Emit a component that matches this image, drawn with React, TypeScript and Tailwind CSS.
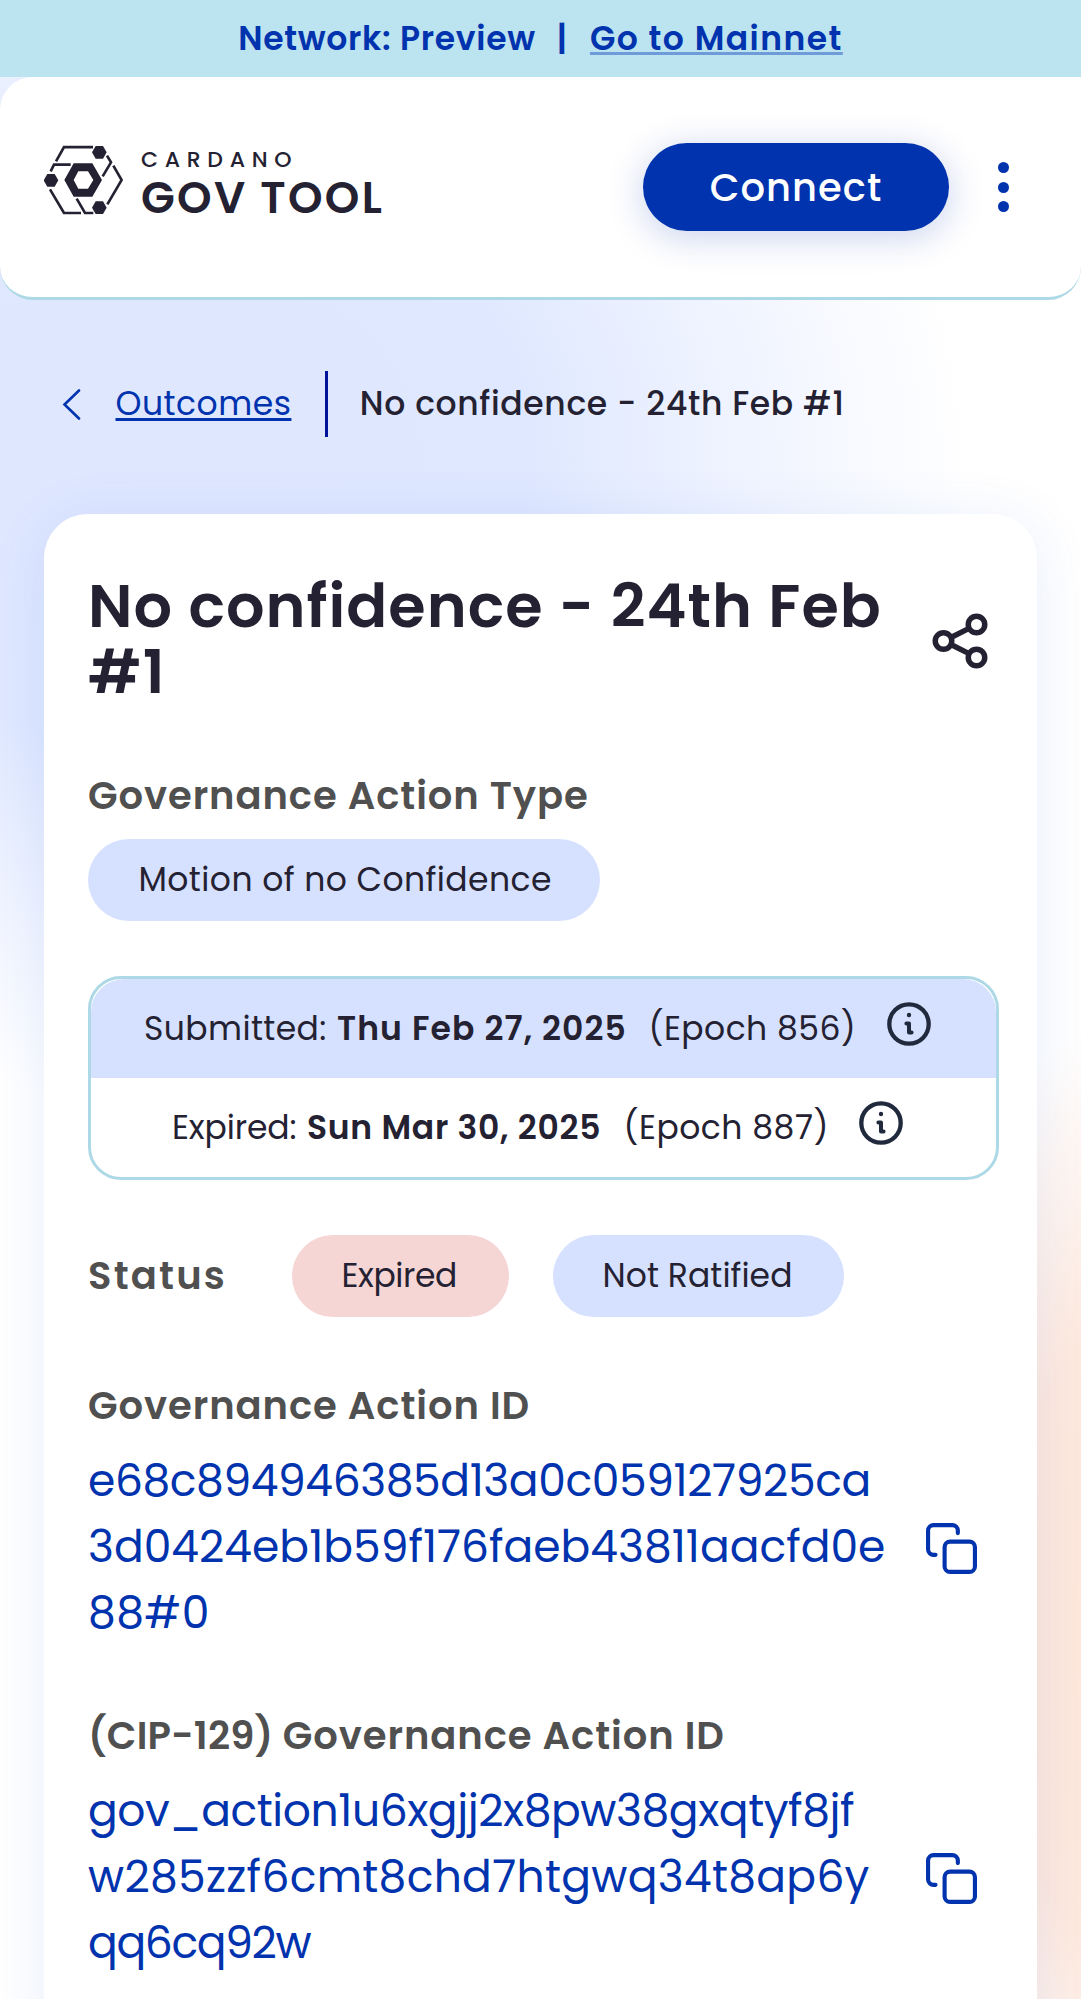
import type { ReactNode } from "react";

function Logo() {
  return (
    <svg className="block h-[70px] w-[79px] shrink-0" viewBox="42 45 237 210" fill="none">
      <g fill="#242232">
        <path d="M186 67 197 48h22l11 19-11 19h-22z" />
        <path d="M41 151l11-19h22l11 19-11 19H52z" />
        <path d="M186 233l11-19h22l11 19-11 19h-22z" />
        <path
          fillRule="evenodd"
          d="M103 150l28-50h56l29 50-29 50h-56zM131 150l14 26h29l16-26-16-26h-29z"
        />
      </g>
      <g stroke="#242232" strokeWidth="8">
        <path d="M189 51.5h-87L78 94" />
        <path d="M122 104H72l-10 20" />
        <path d="M60 178l42 71h51" />
        <path d="M140 206l25 43h25" />
        <path d="M231 77l12 20-25 42" />
        <path d="M250 107l25 43-43 73" />
      </g>
    </svg>
  );
}

function ShareIcon() {
  return (
    <svg className="h-[66px] w-[66px]" viewBox="0 0 24 24" fill="none" stroke="#242232" strokeWidth="2">
      <circle cx="18" cy="6" r="3" />
      <circle cx="6" cy="12" r="3" />
      <circle cx="18" cy="18" r="3" />
      <path d="M8.7 10.7l6.6-3.3M8.7 13.3l6.6 3.3" />
    </svg>
  );
}

function InfoIcon() {
  return (
    <svg className="mb-[9px] h-11 w-11 shrink-0" viewBox="-22 -22 44 44" fill="none" stroke="#212a3d">
      <circle r="19.7" strokeWidth="4.3" />
      <circle cy="-9" r="2.2" fill="#212a3d" stroke="none" />
      <path d="M-2.6 -0.4H0V8.6H2.6" strokeWidth="4" strokeLinecap="round" strokeLinejoin="round" />
    </svg>
  );
}

function CopyIcon() {
  return (
    <svg
      className="mt-[3px] h-[51px] w-[51px] shrink-0"
      viewBox="-0.75 -0.75 18.5 18.5"
      fill="none"
      stroke="#0033ad"
      strokeWidth="1.5"
      strokeLinecap="round"
      strokeLinejoin="round"
    >
      <rect x="6" y="6" width="11" height="11" rx="2" />
      <path d="M10.8 2.9V2a2 2 0 0 0-2-2H2a2 2 0 0 0-2 2v6.8a2 2 0 0 0 2 2h.7" />
    </svg>
  );
}

function Label({ className, children }: { className: string; children: ReactNode }) {
  return (
    <div className={`text-[38.5px] leading-[44px] font-semibold text-[#505050] ${className}`}>{children}</div>
  );
}

function Pill({ className, children }: { className: string; children: ReactNode }) {
  return (
    <div className={`flex h-[82.5px] items-center rounded-full pl-[49.5px] text-[33px] ${className}`}>
      {children}
    </div>
  );
}

function IdBlock({ children }: { children: ReactNode }) {
  return (
    <div className="mt-5 flex items-center justify-between pr-[22px] text-[44px] leading-[66px] text-[#0033ad]">
      <div>{children}</div>
      <CopyIcon />
    </div>
  );
}

export default function App() {
  return (
    <div className="h-[1999px] w-[1081px] overflow-hidden bg-white bg-[radial-gradient(ellipse_800px_640px_at_170px_460px,#dfe7ff_0%,#dfe8ff_45%,#f0f4ff_72%,rgba(255,255,255,0)_100%),radial-gradient(ellipse_240px_620px_at_1120px_1640px,#fee7da_0%,#fee9de_50%,rgba(255,255,255,0)_100%)] font-['Poppins','Inter',sans-serif] whitespace-nowrap text-[#242232]">
      <div className="flex h-[77px] items-center justify-center bg-[#bce3f0] text-[33px] leading-[33px] font-semibold text-[#0033ad]">
        <span className="tracking-[0.7px]">Network: Preview</span>
        <span className="mr-[23px] ml-[21px]">|</span>
        <a className="underline decoration-[#6f9bd9] decoration-[3px] underline-offset-[2px] [text-decoration-skip-ink:none] tracking-[1.45px]">
          Go to Mainnet
        </a>
      </div>

      <header className="flex h-[223px] items-center justify-between rounded-[33px] border-b-3 border-[#add8e6] bg-white pr-11 pb-px pl-11">
        <div className="mb-[14px] flex h-[70px] items-start gap-[18px]">
          <Logo />
          <div className="pt-1">
            <div className="text-[22px] leading-[22px] font-medium tracking-[6.7px]">CARDANO</div>
            <div className="mt-[5px] text-[44px] leading-[44px] font-semibold tracking-[2.3px]">GOV TOOL</div>
          </div>
        </div>
        <div className="flex items-center gap-[21px]">
          <button className="h-[88px] w-[306px] rounded-full bg-[#0033ad] pt-0.5 text-[38.5px] font-medium tracking-[1px] text-white shadow-[0_6px_36px_rgba(0,51,173,0.22)]">
            Connect
          </button>
          <div className="mr-px flex h-[66px] w-[66px] flex-col items-center justify-center gap-[8.3px] pt-px">
            <i className="h-[11px] w-[11px] rounded-full bg-[#0033ad]" />
            <i className="h-[11px] w-[11px] rounded-full bg-[#0033ad]" />
            <i className="h-[11px] w-[11px] rounded-full bg-[#0033ad]" />
          </div>
        </div>
      </header>

      <nav className="mt-[71px] flex h-[66px] items-center pl-[60px] text-[33px]">
        <svg className="h-8 w-6" viewBox="0 0 24 32" fill="none" stroke="#0033ad" strokeWidth="2.6" strokeLinecap="round">
          <path d="M19 2.5 4.5 16.5l14.5 14" />
        </svg>
        <a className="mb-px ml-[31.5px] w-[209.5px] tracking-[0.5px] text-[#0033ad] underline decoration-[3px] underline-offset-[3px]">
          Outcomes
        </a>
        <div className="h-[66px] w-[2.75px] bg-[#00129a]" />
        <span className="mb-px ml-8 font-medium tracking-[0.65px]">No confidence - 24th Feb #1</span>
      </nav>

      <main className="mt-[77px] ml-11 h-[1600px] w-[993px] rounded-[44px] bg-white pt-[59px] pr-[38.5px] pl-11 shadow-[0_6px_55px_rgba(47,98,220,0.11)]">
        <div className="flex items-center justify-between">
          <h1 className="text-[60.5px] leading-[66px] font-semibold tracking-[1.02px]">
            No confidence - 24th Feb
            <br />
            #1
          </h1>
          <div className="mt-1 mr-[5.5px]">
            <ShareIcon />
          </div>
        </div>

        <Label className="mt-[69px] tracking-[0.92px]">Governance Action Type</Label>
        <Pill className="mt-[20.5px] w-[511.5px] bg-[#d6e1ff] tracking-[0.42px]">
          <span className="ml-px">Motion of no Confidence</span>
        </Pill>

        <div className="mt-[55px] h-[204px] rounded-[33px] border-3 border-[#add8e6] text-[33px]">
          <div className="flex h-[99px] items-center rounded-t-[33px] bg-[#d6e1ff] pl-[53px]">
            <span className="w-[193px] tracking-[0.4px]">Submitted:</span>
            <span className="w-[311.5px] font-semibold tracking-[1.1px]">Thu Feb 27, 2025</span>
            <span className="w-[238px] tracking-[0.45px]">(Epoch 856)</span>
            <InfoIcon />
          </div>
          <div className="flex h-[99px] items-center pl-[81px]">
            <span className="w-[135px] tracking-[-0.1px]">Expired:</span>
            <span className="w-[316.5px] font-semibold tracking-[0.72px]">Sun Mar 30, 2025</span>
            <span className="w-[235px] tracking-[0.5px]">(Epoch 887)</span>
            <InfoIcon />
          </div>
        </div>

        <div className="mt-[54.5px] flex items-center">
          <Label className="w-[203.5px] pt-px tracking-[2.2px]">Status</Label>
          <Pill className="w-[217.5px] bg-[#f6d5d5] tracking-[-0.4px]">
            <span className="ml-[0.5px]">Expired</span>
          </Pill>
          <Pill className="ml-11 w-[291px] bg-[#d6e1ff] tracking-[0.05px]">Not Ratified</Pill>
        </div>

        <Label className="mt-[67px] tracking-[0.93px]">Governance Action ID</Label>
        <IdBlock>
          <div className="tracking-[-0.4px]">e68c894946385d13a0c059127925ca</div>
          <div className="tracking-[0.02px]">3d0424eb1b59f176faeb43811aacfd0e</div>
          <div className="tracking-[0.4px]">88#0</div>
        </IdBlock>

        <Label className="mt-[68px] tracking-[0.93px]">
          <span className="tracking-[0.2px]">(CIP-129) </span>
          Governance Action ID
        </Label>
        <IdBlock>
          <div className="tracking-[-0.42px]">gov_action1u6xgjj2x8pw38gxqtyf8jf</div>
          <div className="tracking-[0.3px]">w285zzf6cmt8chd7htgwq34t8ap6y</div>
          <div className="tracking-[-1.35px]">qq6cq92w</div>
        </IdBlock>
      </main>
    </div>
  );
}
